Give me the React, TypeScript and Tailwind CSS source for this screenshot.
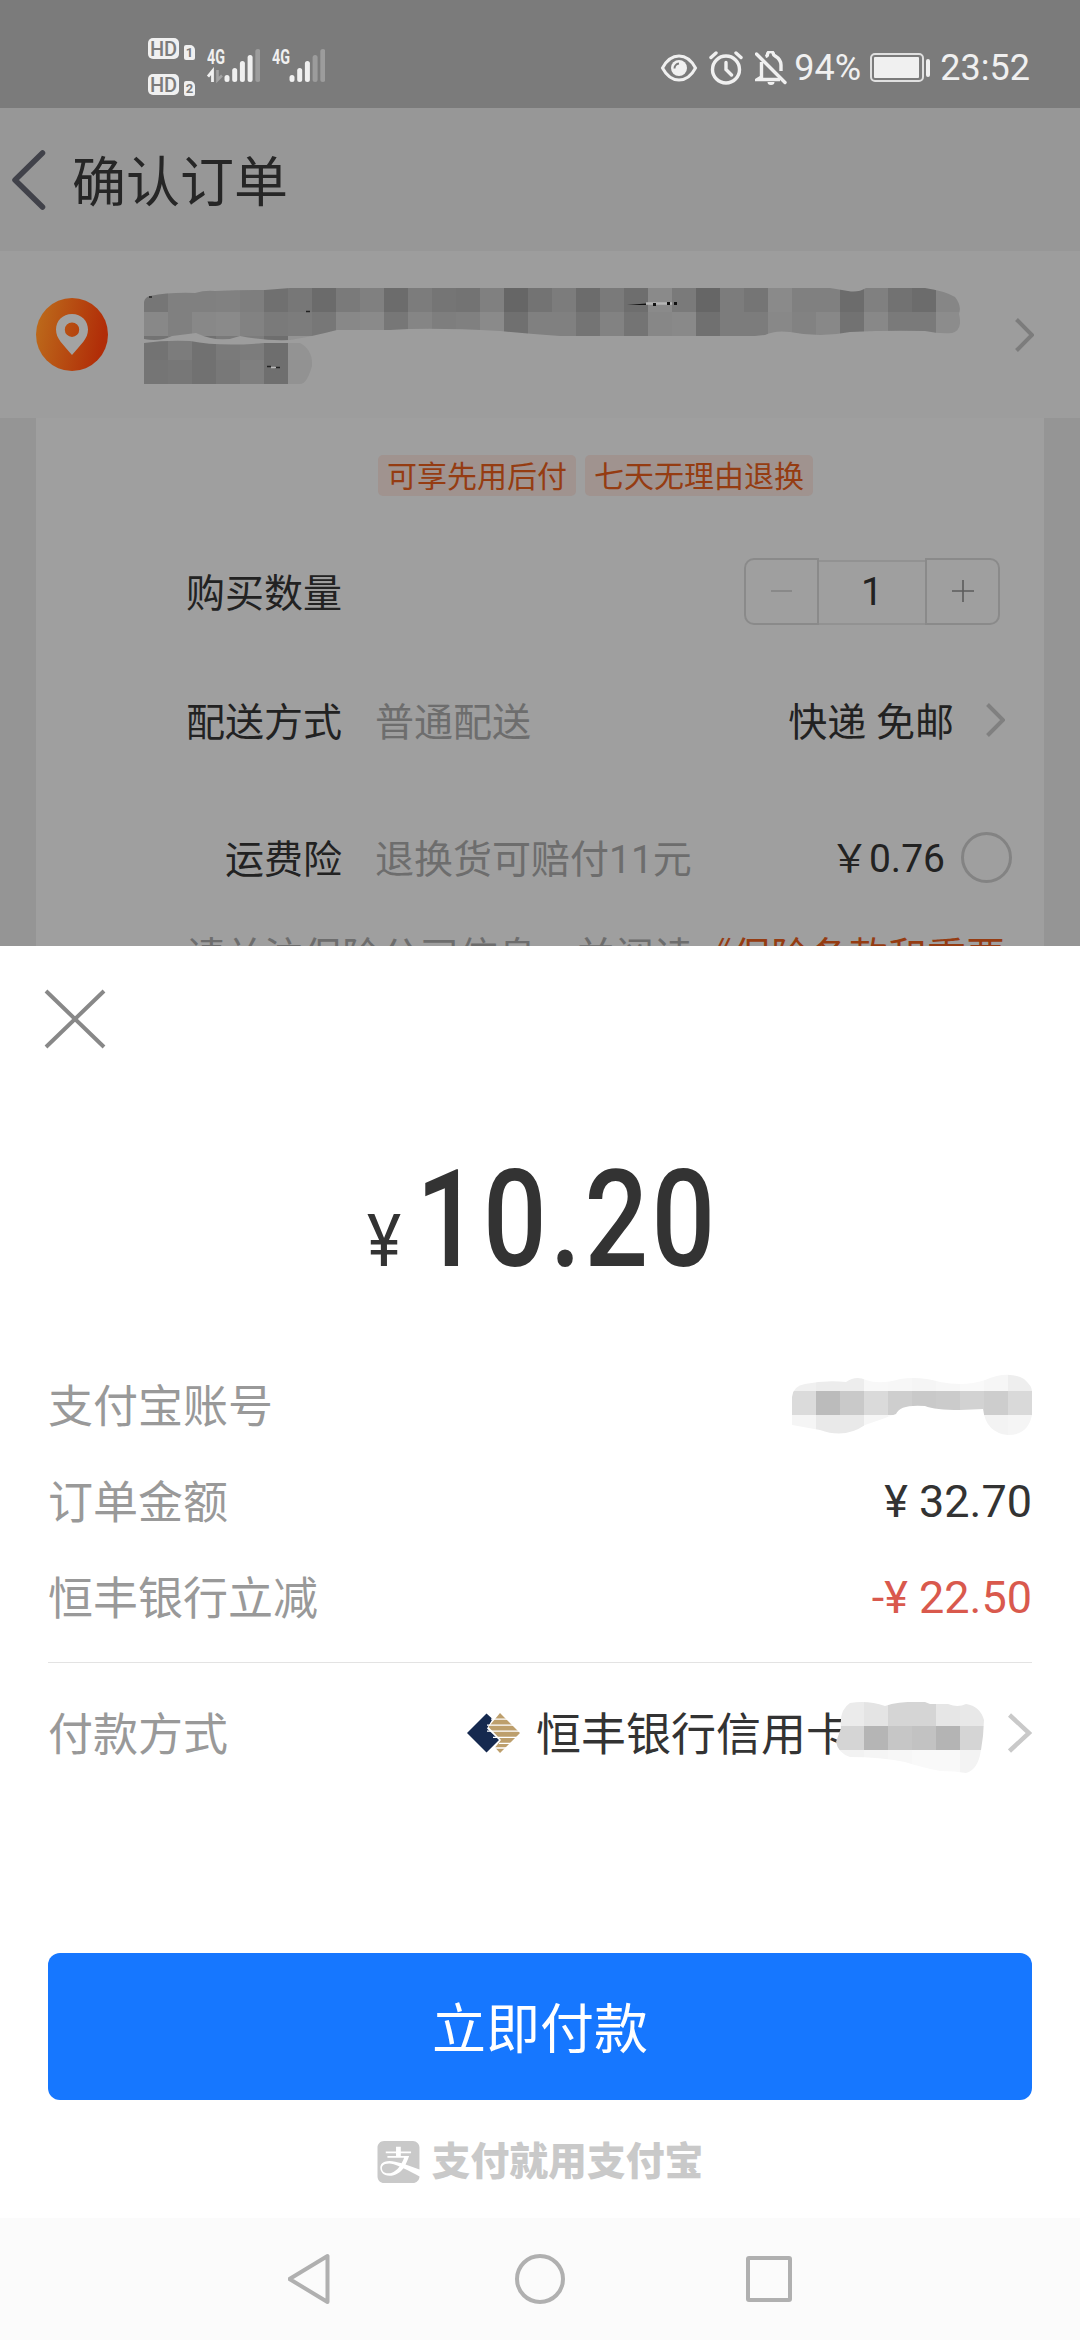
import { FaAlipay } from 'react-icons/fa';

/* ---------- status bar ---------- */

function HdSim({ slot }: { slot: string }) {
  return (
    <div className="flex items-end">
      <span className="flex h-[21px] w-[31px] items-center justify-center rounded-[5px] bg-[#f0f0f0] text-[20px] leading-none font-medium text-[#7b7b7b]">
        HD
      </span>
      <span className="-mb-px ml-[5px] flex h-[15px] w-[11px] items-center justify-center rounded-[2px] rounded-tr-[5px] bg-[#f0f0f0] text-[13px] leading-none font-bold text-[#7b7b7b]">
        {slot}
      </span>
    </div>
  );
}

const BAR_TOPS = [26, 19, 12, 6, 0];

function Signal({ bars, arrows }: { bars: number; arrows?: boolean }) {
  return (
    <svg width="53" height="46" viewBox="0 -10 53 46">
      <text
        x="0"
        y="15"
        fontSize="21"
        fontWeight="700"
        fill="#f0f0f0"
        textLength="18"
        lengthAdjust="spacingAndGlyphs"
      >
        4G
      </text>
      {arrows && (
        <>
          <path d="M5.500 33V22L1 27.500" fill="none" stroke="#f0f0f0" strokeWidth="2.8" />
          <path d="M10.500 21V31L15 26.500" fill="none" stroke="#a3a3a3" strokeWidth="2.600" />
        </>
      )}
      {BAR_TOPS.map((top, i) => (
        <rect
          key={top}
          x={17.5 + i * 7.7}
          y={top}
          width="5"
          height={33 - top}
          rx="2.5"
          fill={i < bars ? '#f0f0f0' : '#9c9c9c'}
        />
      ))}
    </svg>
  );
}

function EyeIcon() {
  return (
    <svg width="38" height="30" viewBox="0 0 38 30" fill="none" stroke="#f0f0f0" strokeWidth="3">
      <path d="M2.500 15C7 6.500 12.500 3 19 3s12 3.500 16.500 12C31 23.500 25.500 27 19 27S7 23.500 2.500 15z" />
      <circle cx="19" cy="15" r="8" fill="#f0f0f0" stroke="none" />
      <path d="M14.500 15.500a5 5 0 0 1 4.500-5" stroke="#7b7b7b" strokeWidth="2" />
    </svg>
  );
}

function AlarmIcon() {
  return (
    <svg width="34" height="34" viewBox="0 0 34 34" fill="none" stroke="#f0f0f0" strokeWidth="3.4" strokeLinecap="round">
      <circle cx="17" cy="18.500" r="13.500" />
      <path d="M17 11.500v7l5.500 5.500M2 6.500l5-4.500M32 6.500L27 2" />
    </svg>
  );
}

function BellOffIcon() {
  return (
    <svg width="32" height="34" viewBox="0 0 32 34" fill="none" stroke="#f0f0f0" strokeWidth="3.4">
      <path d="M6.500 11V26L2.500 28.500H25M10.500 5.500C12 5 12.500 4.500 12.500 3.500a3 3 0 0 1 6 0C18.500 5 26 6 26 14V20" />
      <path d="M1.500 3L30 31.500" strokeLinecap="round" />
      <path d="M12.500 31h7a3.500 3 0 0 1-7 0z" fill="#f0f0f0" stroke="none" />
    </svg>
  );
}

function StatusBar() {
  return (
    <header className="flex h-[108px] shrink-0 justify-between bg-[#7b7b7b] pr-[50px] pl-[148px] text-[#f0f0f0]">
      <div className="flex pt-[38px]">
        <div className="flex flex-col gap-[15px]">
          <HdSim slot="1" />
          <HdSim slot="2" />
        </div>
        <div className="ml-3 flex gap-3 pt-px">
          <Signal bars={4} arrows />
          <Signal bars={3} />
        </div>
      </div>
      <div className="flex h-[135px] items-center text-[36px] leading-none">
        <EyeIcon />
        <span className="ml-[11px]">
          <AlarmIcon />
        </span>
        <span className="ml-3">
          <BellOffIcon />
        </span>
        <span className="ml-[7px] w-[66px]">94%</span>
        <span className="ml-2.5 flex items-center gap-0.5">
          <span className="h-[29px] w-[54px] rounded-[5px] border-2 border-[#e0e0e0] p-0.5">
            <span className="block h-full w-[45px] rounded-[1px] bg-[#f0f0f0]" />
          </span>
          <span className="h-[18px] w-1 rounded-sm bg-[#f0f0f0]" />
        </span>
        <span className="ml-2.5">23:52</span>
      </div>
    </header>
  );
}

/* ---------- redacted areas: 24px mosaic cells clipped by a brush outline ---------- */

interface MosaicProps {
  id: string;
  x: number;
  y: number;
  width: number;
  height: number;
  outline: string;
  rows: { y: number; x: number; h?: number; cells: string }[];
}

function Mosaic({ id, x, y, width, height, outline, rows }: MosaicProps) {
  return (
    <svg width={width} height={height} viewBox={`${x} ${y} ${width} ${height}`} className="block shrink-0" shapeRendering="crispEdges">
      <clipPath id={id}>
        <path d={outline} />
      </clipPath>
      <g clipPath={`url(#${id})`}>
        {rows.map((row) =>
          row.cells.split(' ').map((tone, i) => (
            <rect
              key={`${row.y}-${i}`}
              x={row.x + i * 24}
              y={row.y}
              width="24"
              height={row.h ?? 24}
              fill={`#${tone}${tone}${tone}`}
            />
          )),
        )}
      </g>
    </svg>
  );
}

function AddressMosaic() {
  return (
    <div className="relative">
      <Mosaic
        id="address"
        x={144}
        y={286}
        width={816}
        height={100}
        outline="M144 302Q145 297 150 296Q170 292 195 293Q205 290 215 291Q240 290 265 290L290 288H830L848 291Q858 293 866 288H925Q945 291 955 297Q962 306 959 314Q963 330 952 333Q940 334 925 331Q890 330 850 332Q820 338 790 332Q775 330 765 335L755 336H560Q530 334 500 331Q430 327 390 330Q360 330 337 330Q310 337 290 340Q265 341 240 336Q220 344 196 333L172 336Q160 342 144 339zM144 343Q165 340 190 341Q220 347 264 343H300Q313 350 312 366Q307 384 300 384H144z"
        rows={[
          { y: 286, x: 144, h: 26, cells: '76 80 80 81 7e 70 77 6b 7a 80 6c 7c 75 73 80 66 73 7c 6c 7a 6e 8a 7a 66 7c 75 8a 80 80 6c 80 72 6c 86' },
          { y: 312, x: 144, cells: '88 80 88 8a 82 7a 7c 77 88 8a 77 85 7e 80 8a 70 80 80 74 82 74 87 89 70 7c 7c 88 82 88 72 88 7a 7a 8c' },
          { y: 336, x: 144, cells: '73 7c 71 7a 7c 6e 93' },
          { y: 360, x: 144, cells: '75 77 71 78 7f 6f 92' },
        ]}
      />
      <svg className="absolute top-0 left-0" width="816" height="100" viewBox="144 286 816 100">
        <path d="M627 305L646 303.500V305z" fill="#111" />
        <path d="M646 303.500H672" stroke="#b4b4b4" strokeWidth="2.500" />
        <path d="M653 304.500h3M667 303.500h3M674 303.500h3" stroke="#111" strokeWidth="3" />
        <path d="M306 311.500h4M149 297h3M267 366.500h4M275 367.500h5" stroke="#222" strokeWidth="1.500" />
        <path d="M271 367.500h5" stroke="#b8b8b8" strokeWidth="1.500" />
      </svg>
    </div>
  );
}

function Chevron({ size, color, stroke }: { size: 'sm' | 'lg'; color: string; stroke: number }) {
  return size === 'sm' ? (
    <svg width="20" height="36" viewBox="0 0 20 36" fill="none" stroke={color} strokeWidth={stroke}>
      <path d="M2.500 2.500L18 18L2.500 33.500" />
    </svg>
  ) : (
    <svg width="24" height="40" viewBox="0 0 24 40" fill="none" stroke={color} strokeWidth={stroke}>
      <path d="M1.500 2L21 20L1.500 38" />
    </svg>
  );
}

/* ---------- order page behind the payment sheet ---------- */

function TitleBar() {
  return (
    <div className="flex h-[143px] shrink-0 items-center bg-[#979797] pl-[11px]">
      <svg width="36" height="62" viewBox="0 0 36 62" fill="none" stroke="#41424a" strokeWidth="5.5" strokeLinecap="round" strokeLinejoin="round">
        <path d="M31.500 4L4 31L31.500 58" />
      </svg>
      <h1 className="ml-[25px] pt-2 text-[54px] leading-none text-[#262626]">确认订单</h1>
    </div>
  );
}

function AddressRow() {
  return (
    <div className="flex h-[167px] shrink-0 items-center bg-[#9d9d9d] pr-[46px] pl-9">
      <svg width="72" height="74" viewBox="0 0 72 74">
        <defs>
          <linearGradient id="pin" x1="0" y1="0" x2="1" y2="0.200">
            <stop offset="0" stopColor="#bd6e1c" />
            <stop offset="1" stopColor="#b12d08" />
          </linearGradient>
        </defs>
        <ellipse cx="36" cy="36.500" rx="36" ry="36.500" fill="url(#pin)" />
        <path
          d="M36 16c-9.500 0-16 7-16 15.500C20 41 27 46 36 57c9-11 16-16 16-25.500C52 23 45.500 16 36 16zm0 8.500a7.200 7.200 0 1 1 0 14.400a7.200 7.200 0 0 1 0-14.400z"
          fill="#a3a3a3"
        />
      </svg>
      <div className="mr-auto ml-9 pt-0.5">
        <AddressMosaic />
      </div>
      <Chevron size="sm" color="#7c7c7c" stroke={4} />
    </div>
  );
}

function Tag({ children }: { children: string }) {
  return (
    <span className="flex h-[41px] items-center rounded-[5px] bg-[#a0938f] px-[9px] pt-[3px] text-[30px] leading-none text-[#953c12]">
      {children}
    </span>
  );
}

function QuantityStepper() {
  return (
    <div className="flex h-[67px] w-[256px] items-stretch">
      <div className="flex w-[75px] items-center justify-center rounded-l-[10px] border-2 border-[#8a8a8a]">
        <span className="h-0.5 w-[21px] bg-[#898989]" />
      </div>
      <div className="mt-0.5 flex flex-1 items-center justify-center border-y-2 border-[#929292] text-[39px] leading-none text-[#222]">
        1
      </div>
      <div className="flex w-[75px] items-center justify-center rounded-r-[10px] border-2 border-[#8a8a8a]">
        <svg width="22" height="22" viewBox="0 0 22 22" stroke="#5c5c5c" strokeWidth="1.600">
          <path d="M0 11H22M11 0V22" />
        </svg>
      </div>
    </div>
  );
}

function OrderCard() {
  return (
    <div className="h-[528px] shrink-0 overflow-hidden bg-[#959595] px-9">
      <div className="h-full bg-[#9f9f9f] pt-[37px] text-[39px] leading-none text-[#222]">
        <div className="ml-[342px] flex gap-[9px]">
          <Tag>可享先用后付</Tag>
          <Tag>七天无理由退换</Tag>
        </div>
        <div className="mt-[29px] flex h-[132px] items-center justify-between pr-11 pl-[150px]">
          <span className="pt-1.5">购买数量</span>
          <QuantityStepper />
        </div>
        <div className="flex h-[126px] items-center pr-[39px] pl-[150px]">
          <span className="pt-1.5">配送方式</span>
          <span className="ml-[33px] pt-1.5 text-[#6d6d6d]">普通配送</span>
          <span className="mr-[31px] ml-auto pt-1.5">快递 免邮</span>
          <Chevron size="sm" color="#808080" stroke={4} />
        </div>
        <div className="flex h-[148px] items-center pr-8 pl-[189px]">
          <span className="pt-1.5">运费险</span>
          <span className="ml-[33px] pt-1.5 text-[#6d6d6d]">退换货可赔付11元</span>
          <span className="mr-4 ml-auto pt-1">￥0.76</span>
          <span className="size-[51px] rounded-full border-3 border-[#838383]" />
        </div>
        <p className="pt-[3px] pl-[150px] leading-[46px] whitespace-nowrap text-[#6d6d6d]">
          请关注保险公司信息，并阅读<span className="text-[#953c12]">《保险条款和重要</span>
        </p>
      </div>
    </div>
  );
}

/* ---------- payment sheet ---------- */

function BankLogo() {
  return (
    <svg width="53" height="40" viewBox="0 0 53 40">
      <path d="M19.500 .5L25.500 6L20 15.500L32 27L19.500 39.500L0 20z" fill="#15294f" />
      <path d="M33 0L53 20L33 40L28 34.500L34 27L21.500 14z" fill="#bd9f6c" />
      <path d="M24 6.200H45M20 12.200H50M20 18.200H53M26 24.300H53M32 30.300H48M26 35H42" stroke="#fff" strokeWidth="1.300" />
    </svg>
  );
}

function Row({ label, children }: { label: string; children: React.ReactNode }) {
  return (
    <div className="flex h-24 items-center justify-between">
      <span className="pt-1 text-[#999]">{label}</span>
      {children}
    </div>
  );
}

function PaymentSheet() {
  return (
    <section className="flex h-[1272px] shrink-0 flex-col bg-white px-12 text-[45px] leading-none text-[#333]">
      <svg className="mt-[43px] -ml-[5px] shrink-0" width="64" height="60" viewBox="0 0 64 60" stroke="#888" strokeWidth="4">
        <path d="M3 2L61 58M61 2L3 58" />
      </svg>

      <div className="mt-[104px] flex h-[137px] items-baseline pl-[319px] font-medium">
        <span className="inline-block w-[49px] origin-left scale-x-[.9] text-[72px] font-normal">¥</span>
        <span className="inline-block w-[306px] origin-left scale-x-[.83] text-[135px] tracking-[4px]">10.20</span>
      </div>

      <div className="mt-[67px]">
        <Row label="支付宝账号">
          <Mosaic
            id="account"
            x={792}
            y={1374}
            width={240}
            height={64}
            outline="M792 1398Q793 1387 805 1385Q825 1381 846 1383Q856 1376 866 1381Q880 1386 900 1380Q920 1377 940 1383Q965 1388 985 1381Q1008 1371 1024 1380Q1032 1387 1032 1392V1416Q1028 1436 1008 1436Q986 1434 983 1410L960 1411Q935 1411 925 1407Q900 1405 896 1415Q880 1421 865 1426Q845 1440 820 1431L792 1426z"
            rows={[
              { y: 1368, x: 792, cells: 'f0 ec ed f8 f7 f5 f7 f9 f6 ee' },
              { y: 1392, x: 792, cells: 'db bb c9 da ce c9 cb d2 cd d9' },
              { y: 1416, x: 792, cells: 'f5 e9 e9 f6 fa ff ff ff f3 f5' },
            ]}
          />
        </Row>
        <Row label="订单金额">
          <span>¥ 32.70</span>
        </Row>
        <Row label="恒丰银行立减">
          <span className="text-[#d9594d]">-¥ 22.50</span>
        </Row>
      </div>

      <div className="mt-[17px] h-px shrink-0 bg-[#e3e3e3]" />

      <div className="mt-[22px] flex h-24 shrink-0 items-center">
        <span className="pt-1 text-[#999]">付款方式</span>
        <span className="mr-4 ml-auto">
          <BankLogo />
        </span>
        <span className="pt-1">恒丰银行信用卡</span>
        <span className="mr-6 -ml-4 pt-[5px]">
          <Mosaic
            id="card"
            x={835}
            y={1696}
            width={149}
            height={84}
            outline="M841 1730Q839 1712 850 1705Q868 1702 885 1708Q900 1703 925 1704L930 1706H948Q958 1710 966 1706Q980 1708 984 1722L983 1738L981 1752Q978 1772 966 1775Q955 1773 940 1773Q920 1769 905 1764Q880 1759 850 1759Q838 1755 836 1744z"
            rows={[
              { y: 1704, x: 816, cells: 'eb eb e4 d5 d5 e6 e8' },
              { y: 1728, x: 816, cells: 'd4 d5 b5 c6 c2 b4 d5' },
              { y: 1752, x: 816, cells: 'f2 f2 f5 f7 f9 f9 f3' },
            ]}
          />
        </span>
        <Chevron size="lg" color="#c9c9c9" stroke={4.5} />
      </div>

      <button className="mt-[172px] h-[147px] shrink-0 rounded-xl bg-[#1677ff] pt-2 text-[54px] leading-none text-white">
        立即付款
      </button>

      <div className="mt-[38px] flex items-center justify-center gap-3 text-[#c9c9c9]">
        <FaAlipay className="h-[48px] w-[43px]" />
        <span className="text-[38.800px] font-black">支付就用支付宝</span>
      </div>
    </section>
  );
}

function NavBar() {
  return (
    <nav className="flex flex-1 items-center justify-center bg-[#fbfbfb]">
      <svg width="504" height="54" viewBox="0 0 504 54" fill="none" stroke="#b0b0b0" strokeWidth="4" strokeLinejoin="round">
        <path d="M39.500 4V50L1.500 27z" />
        <circle cx="252" cy="27" r="23" />
        <rect x="460" y="6" width="42" height="42" rx="1" />
      </svg>
    </nav>
  );
}

export default function App() {
  return (
    <main className="flex h-[2340px] w-[1080px] flex-col overflow-hidden bg-white font-[Roboto,'Noto_Sans_CJK_SC',sans-serif]">
      <StatusBar />
      <TitleBar />
      <AddressRow />
      <OrderCard />
      <PaymentSheet />
      <NavBar />
    </main>
  );
}
